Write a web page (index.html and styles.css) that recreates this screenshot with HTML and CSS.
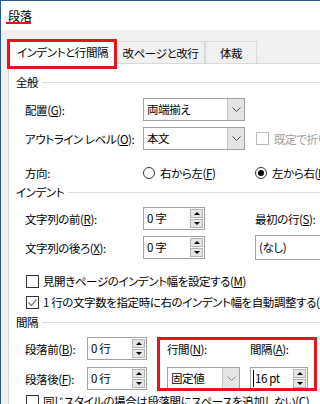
FILE: index.html
```html
<!DOCTYPE html>
<html lang="ja">
<head>
<meta charset="utf-8">
<title>段落</title>
<link rel="stylesheet" href="styles.css">
</head>
<body>
<div class="window">
  <header class="titlebar"><span class="title">段落</span></header>
  <div class="content">
    <nav class="tabs">
      <div class="tab tab-active">インデントと行間隔</div>
      <div class="tab tab-2">改ページと改行</div>
      <div class="tab tab-3">体裁</div>
    </nav>
    <section class="panel">
      <div class="group-head"><span>全般</span><span class="rule"></span></div>

      <div class="row g3 mt8">
        <div class="lbl">配置(<u>G</u>):</div>
        <div class="select w102"><span class="val">両端揃え</span><span class="dd"><svg width="9" height="5" viewBox="0 0 9 5"><polyline points="0.5,0.5 4.5,4.5 8.5,0.5" fill="none" stroke="#444" stroke-width="1"/></svg></span></div>
        <div></div>
      </div>
      <div class="row g3 mt6">
        <div class="lbl">アウトライン レベル(<u>O</u>):</div>
        <div class="select w102"><span class="val">本文</span><span class="dd"><svg width="9" height="5" viewBox="0 0 9 5"><polyline points="0.5,0.5 4.5,4.5 8.5,0.5" fill="none" stroke="#444" stroke-width="1"/></svg></span></div>
        <div class="check disabled"><span class="cb"></span><span>既定で折りたたみ</span></div>
      </div>
      <div class="row g3 mt11">
        <div class="lbl">方向:</div>
        <div class="radio"><span class="circle"></span><span>右から左(<u>F</u>)</span></div>
        <div class="radio on"><span class="circle"></span><span>左から右(<u>L</u>)</span></div>
      </div>

      <div class="group-head"><span>インデント</span><span class="rule"></span></div>

      <div class="row g3 mt7">
        <div class="lbl">文字列の前(<u>R</u>):</div>
        <div class="spin w62"><span class="val">0 字</span><span class="btns"><span class="sb"><i class="up"></i></span><span class="sb"><i class="down"></i></span></span></div>
        <div class="lbl">最初の行(<u>S</u>):</div>
      </div>
      <div class="row g3 mt5">
        <div class="lbl">文字列の後ろ(<u>X</u>):</div>
        <div class="spin w62"><span class="val">0 字</span><span class="btns"><span class="sb"><i class="up"></i></span><span class="sb"><i class="down"></i></span></span></div>
        <div class="select tall w90"><span class="val">(なし)</span></div>
      </div>

      <div class="crow mt13"><span class="cb"></span><span>見開きページのインデント幅を設定する(<u>M</u>)</span></div>
      <div class="crow mt1"><span class="cb checked"><svg width="11" height="11" viewBox="0 0 11 11"><polyline points="1.5,5.5 4.5,8.5 9.5,2.5" fill="none" stroke="#7a7a7a" stroke-width="1.2"/></svg></span><span>1 行の文字数を指定時に右のインデント幅を自動調整する(<u>D</u>)</span></div>

      <div class="group-head mt2"><span>間隔</span><span class="rule"></span></div>

      <div class="row gs mt7">
        <div class="lbl">段落前(<u>B</u>):</div>
        <div class="spin w60"><span class="val">0 行</span><span class="btns"><span class="sb"><i class="up"></i></span><span class="sb"><i class="down"></i></span></span></div>
        <div class="lbl">行間(<u>N</u>):</div>
        <div class="lbl">間隔(<u>A</u>):</div>
      </div>
      <div class="row gs mt7">
        <div class="lbl">段落後(<u>F</u>):</div>
        <div class="spin w60"><span class="val">0 行</span><span class="btns"><span class="sb"><i class="up"></i></span><span class="sb"><i class="down"></i></span></span></div>
        <div class="select w73"><span class="val">固定値</span><span class="dd"><svg width="9" height="5" viewBox="0 0 9 5"><polyline points="0.5,0.5 4.5,4.5 8.5,0.5" fill="none" stroke="#888" stroke-width="1"/></svg></span></div>
        <div class="spin w58"><span class="val caret">16 pt</span><span class="btns"><span class="sb"><i class="up"></i></span><span class="sb"><i class="down"></i></span></span></div>
      </div>

      <div class="crow mt1"><span class="cb"></span><span>同じスタイルの場合は段落間にスペースを追加しない(<u>C</u>)</span></div>
    </section>
  </div>

  <div class="mark mark-title"></div>
  <div class="mark mark-tab"></div>
  <div class="mark mark-spacing"></div>
</div>
</body>
</html>
```

FILE: styles.css
```css
* { box-sizing: border-box; }
html, body { margin: 0; padding: 0; }
body {
  width: 320px;
  height: 404px;
  overflow: hidden;
  font-family: "Noto Sans CJK JP", "Noto Sans", sans-serif;
  font-size: 11.5px;
  letter-spacing: -0.4px;
  line-height: 16px;
  color: #000;
  font-feature-settings: "palt";
}
u { text-decoration: underline; text-underline-offset: 1px; }

.window {
  position: relative;
  width: 320px;
  height: 404px;
  overflow: hidden;
  background: #f0f0f0;
  border-top: 1px solid #2b5797;
  border-left: 1px solid #2b5797;
}
.titlebar {
  height: 29px;
  background: #fff;
  display: flex;
  align-items: center;
  padding-left: 7px;
}
.title { font-size: 12px; letter-spacing: 0; }
.content { padding: 9px 0 0 7px; }

.tabs {
  display: flex;
  align-items: flex-end;
  height: 24px;
  position: relative;
  z-index: 1;
}
.tab {
  height: 22px;
  border: 1px solid #d9d9d9;
  border-bottom: none;
  display: flex;
  align-items: center;
  justify-content: center;
  background: #f0f0f0;
  white-space: nowrap;
}
.tab-active { width: 109px; height: 25px; margin-bottom: -1px; background: #fff; }
.tab-2 { width: 88px; border-left: none; }
.tab-3 { width: 52px; }

.panel {
  background: #fff;
  border: 1px solid #d9d9d9;
  width: 360px;
  height: 360px;
  padding: 10px 0 0 7px;
  white-space: nowrap;
}
.group-head { display: flex; align-items: center; height: 16px; }
.group-head .rule { flex: 1; border-top: 1px solid #dcdcdc; margin-left: 4px; }

.row { display: grid; align-items: center; height: 23px; margin-left: 9px; }
.g3 { grid-template-columns: 118px 112px auto; }
.gs { grid-template-columns: 62px 80px 83px auto; }

.mt1 { margin-top: 1px; }
.mt2 { margin-top: 2px; }
.mt5 { margin-top: 5px; }
.mt6 { margin-top: 6px; }
.mt7 { margin-top: 7px; }
.mt8 { margin-top: 8px; }
.mt11 { margin-top: 11px; }
.mt13 { margin-top: 13px; }

.select {
  display: flex;
  height: 23px;
  border: 1px solid #a0a0a0;
  background: #fff;
}
.select.tall { height: 25px; }
.select .val { flex: 1; padding-left: 3px; line-height: 21px; }
.select.tall .val { line-height: 23px; }
.select .dd {
  width: 17px;
  background: #e5e5e5;
  border-left: 1px solid #c4c4c4;
  display: flex;
  align-items: center;
  justify-content: center;
}
.w102 { width: 102px; }
.w90 { width: 90px; }
.w73 { width: 73px; }
.w62 { width: 62px; }
.w60 { width: 60px; }
.w58 { width: 58px; }

.spin {
  display: flex;
  height: 23px;
  border: 1px solid #a0a0a0;
  background: #fff;
}
.spin .val { flex: 1; padding-left: 3px; line-height: 21px; }
.spin .val.caret { border-left: 1px solid #000; margin: 2px 0 2px 2px; padding-left: 1px; line-height: 17px; }
.spin .btns {
  width: 14px;
  display: flex;
  flex-direction: column;
  gap: 1px;
  padding: 1px 1px 1px 0;
}
.sb {
  flex: 1;
  background: #e5e5e5;
  border: 1px solid #b4b4b4;
  display: flex;
  align-items: center;
  justify-content: center;
}
.sb i { width: 0; height: 0; border-left: 3px solid transparent; border-right: 3px solid transparent; }
.sb .up { border-bottom: 3px solid #000; }
.sb .down { border-top: 3px solid #000; }

.check, .radio { display: flex; align-items: center; gap: 5px; }
.cb {
  width: 13px;
  height: 13px;
  border: 1px solid #333;
  background: #fff;
  display: flex;
  align-items: center;
  justify-content: center;
  flex: none;
}
.check.disabled { color: #a0a0a0; margin-left: 1px; }
.check.disabled .cb { border-color: #bcbcbc; }
.circle {
  width: 12px;
  height: 12px;
  border: 1px solid #333;
  border-radius: 50%;
  background: #fff;
  display: flex;
  align-items: center;
  justify-content: center;
  flex: none;
}
.radio.on .circle::after {
  content: "";
  width: 6px;
  height: 6px;
  border-radius: 50%;
  background: #000;
}

.crow {
  display: flex;
  align-items: center;
  gap: 4px;
  height: 20px;
  margin-left: 10px;
}

.mark { position: absolute; z-index: 5; border: 3px solid #e5141e; }
.mark-title { left: 5px; top: 21px; width: 25px; height: 2px; border: none; background: #e5141e; }
.mark-tab { left: 6px; top: 38px; width: 110px; height: 30px; }
.mark-spacing { left: 156px; top: 336px; width: 160px; height: 54px; }
```
